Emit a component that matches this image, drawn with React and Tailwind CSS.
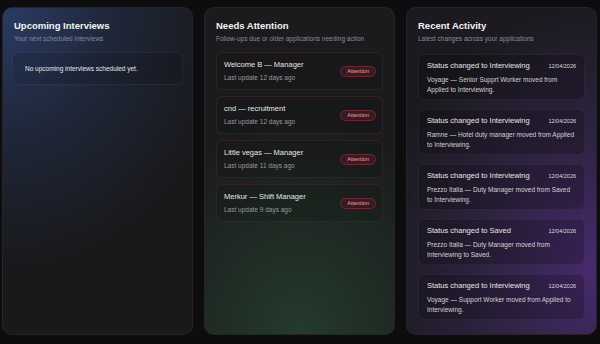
import React from "react";

const attention = [
  { title: "Welcome B — Manager", sub: "Last update 12 days ago" },
  { title: "cnd — recruitment", sub: "Last update 12 days ago" },
  { title: "Little vegas — Manager", sub: "Last update 11 days ago" },
  { title: "Merkur — Shift Manager", sub: "Last update 9 days ago" },
];

const activity = [
  {
    title: "Status changed to Interviewing",
    body: "Voyage — Senior Supprt Worker moved from Applied to Interviewing.",
  },
  {
    title: "Status changed to Interviewing",
    body: "Ramne — Hotel duty manager moved from Applied to Interviewing.",
  },
  {
    title: "Status changed to Interviewing",
    body: "Prezzo Italia — Duty Manager moved from Saved to Interviewing.",
  },
  {
    title: "Status changed to Saved",
    body: "Prezzo Italia — Duty Manager moved from Interviewing to Saved.",
  },
  {
    title: "Status changed to Interviewing",
    body: "Voyage — Support Worker moved from Applied to Interviewing.",
  },
];

const PanelHead = ({ title, sub }) => (
  <>
    <h2 className="text-[9.5px] leading-[13px] font-bold text-[#f3f4f6]">{title}</h2>
    <p className="mt-[2px] text-[6.5px] leading-[10px] text-[#878c96]">{sub}</p>
  </>
);

const App = () => {
  return (
    <div className="min-h-screen bg-[#0d0d0f] pl-[2px] pr-[3px] pt-[7px] font-['Liberation_Sans',Arial,sans-serif]">
      <div className="grid grid-cols-3 gap-[11px]">
        {/* upcoming */}
        <div className="h-[328px] rounded-[10px] border border-white/10 bg-clip-padding bg-[#19191b] bg-[radial-gradient(120%_80%_at_0%_0%,#2a3b64_0%,#1f2638_50%,transparent_100%)] px-[11px] pt-[11px]">
          <PanelHead title="Upcoming Interviews" sub="Your next scheduled interviews" />
          <div className="-mx-[2px] mt-[8px] flex h-[33px] items-center rounded-[6px] border border-white/5 bg-black/10 px-[12px]">
            <span className="text-[6.5px] text-[#e5e7eb]">No upcoming interviews scheduled yet.</span>
          </div>
        </div>

        {/* needs attention */}
        <div className="h-[328px] rounded-[10px] border border-white/10 bg-clip-padding bg-[#1b1b1d] bg-[radial-gradient(95%_65%_at_50%_100%,#243b2d_0%,#1f2b24_50%,transparent_100%)] px-[11px] pt-[11px]">
          <PanelHead title="Needs Attention" sub="Follow-ups due or older applications needing action" />
          <div className="mt-[8px] flex flex-col gap-[6px]">
            {attention.map((a, i) => (
              <div
                key={i}
                className="flex h-[38px] items-center justify-between rounded-[6px] border border-[#3a2427]/80 bg-black/10 pl-[7px] pr-[6px]"
              >
                <div>
                  <div className="text-[7.5px] leading-[12px] text-[#e6e6e6]">{a.title}</div>
                  <div className="mt-[1px] text-[6.5px] leading-[12px] text-[#999999]">{a.sub}</div>
                </div>
                <span className="flex h-[11px] items-center rounded-full border border-[#6a2a34] bg-[#381a1f] px-[6px] text-[5.5px] text-[#f0a2ac]">
                  Attention
                </span>
              </div>
            ))}
          </div>
        </div>

        {/* recent activity */}
        <div className="h-[328px] rounded-[10px] border border-white/10 bg-clip-padding bg-[#1c1a20] bg-[radial-gradient(115%_80%_at_100%_80%,#482a6e_0%,#2f2342_50%,transparent_100%)] px-[11px] pt-[11px]">
          <PanelHead title="Recent Activity" sub="Latest changes across your applications" />
          <div className="mt-[10px] flex flex-col gap-[9px]">
            {activity.map((a, i) => (
              <div key={i} className="h-[46px] rounded-[6px] border border-white/5 bg-black/20 px-[8px] pt-[6px]">
                <div className="flex items-center justify-between">
                  <span className="text-[7.5px] leading-[10px] text-[#e6e6e6]">{a.title}</span>
                  <span className="text-[5.5px] leading-[10px] text-[#dedede]">12/04/2026</span>
                </div>
                <p className="mt-[4px] text-[6.5px] leading-[9.5px] text-[#d2d2d2]">{a.body}</p>
              </div>
            ))}
          </div>
        </div>
      </div>
    </div>
  );
};

export default App;
